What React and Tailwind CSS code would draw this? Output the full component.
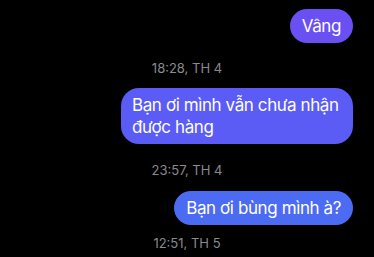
export default function App() {
  const font = { fontFamily: "Inter, 'Noto Sans', sans-serif" };
  return (
    <div
      className="w-[374px] h-[257px] overflow-hidden bg-black flex flex-col pt-[9px] pr-[21px]"
      style={font}
    >
      <div className="flex justify-end">
        <div className="rounded-full bg-[#6a4ff2] px-3 py-[6px] text-[17px] leading-[22px] tracking-[-0.4px] text-white">
          Vâng
        </div>
      </div>

      <div className="mt-[17px] pl-[21px] text-center text-[13px] leading-[16px] text-[#8a8a8f]">
        18:28, TH 4
      </div>

      <div className="mt-[12px] flex justify-end">
        <div className="max-w-[232px] rounded-[18px] bg-[#5b5bf5] px-[11px] py-[6px] text-[17px] leading-[22px] tracking-[-0.4px] text-white">
          Bạn ơi mình vẫn chưa nhận được hàng
        </div>
      </div>

      <div className="mt-[18px] pl-[21px] text-center text-[13px] leading-[16px] text-[#8a8a8f]">
        23:57, TH 4
      </div>

      <div className="mt-[13px] flex justify-end">
        <div className="rounded-full bg-[#4c6bf3] px-3 py-[6px] text-[17px] leading-[22px] tracking-[-0.4px] text-white">
          Bạn ơi bùng mình à?
        </div>
      </div>

      <div className="mt-[10px] pl-[21px] text-center text-[13px] leading-[16px] text-[#8a8a8f]">
        12:51, TH 5
      </div>
    </div>
  );
}
